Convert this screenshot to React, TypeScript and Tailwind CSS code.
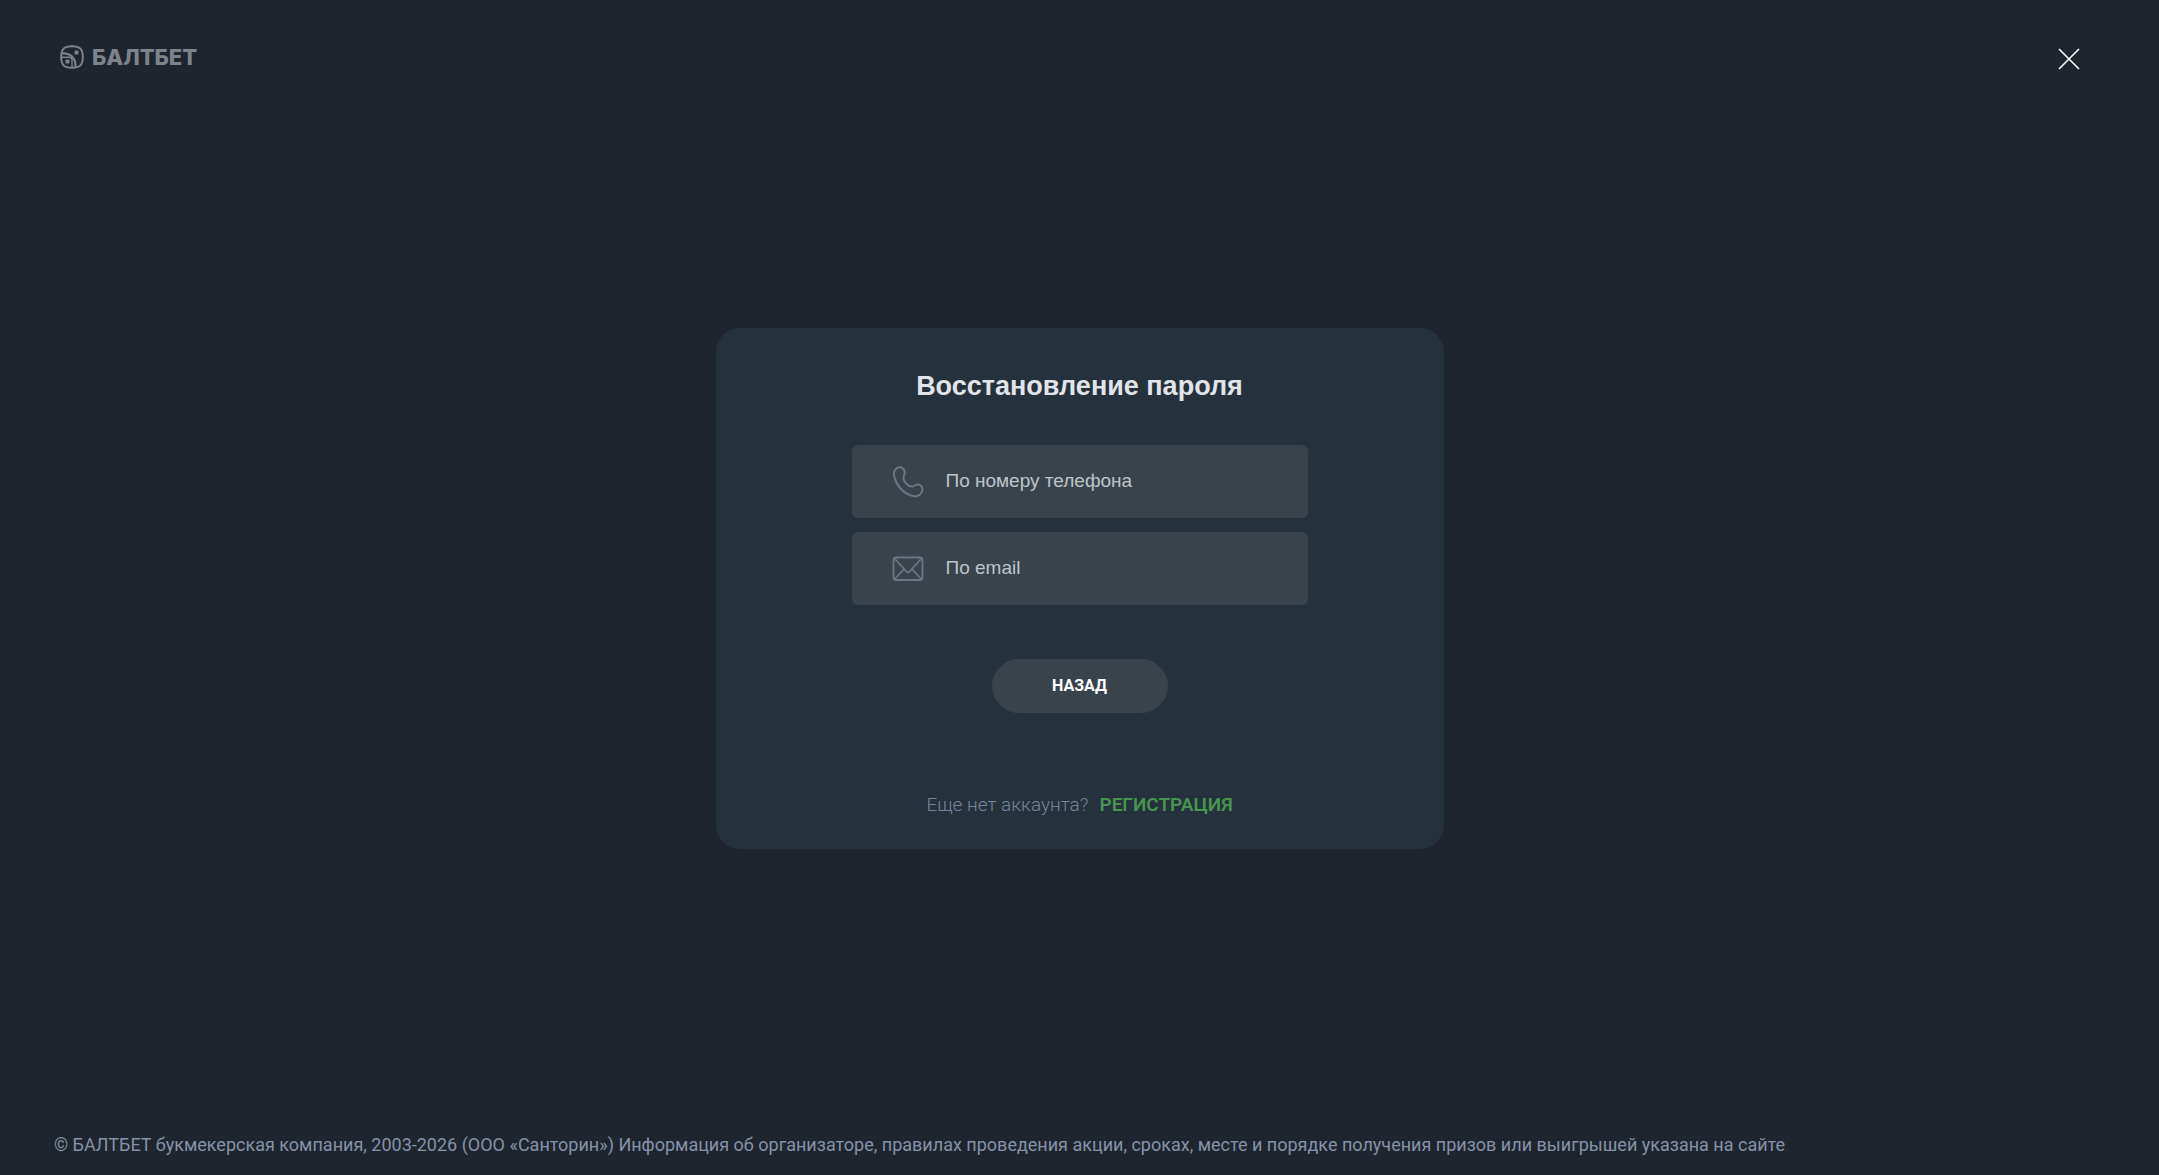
import React from "react";

const PhoneIcon = () => (
  <svg width="32" height="32" viewBox="0 0 32 32" fill="none" stroke="currentColor" strokeWidth="2" strokeLinejoin="round" aria-hidden="true">
    <path d="M2 9C1.4 5.600 3.400 1.600 7.200 1.300C10.600 1 13 4 12.800 6.800C12.600 9.200 11.300 10.200 11.500 12.300C11.800 15.800 16 20.300 19.700 20.600C21.800 20.800 22.600 19 25.200 18.600C28.400 18.200 31 21 30.400 24.300C29.700 28 26.600 30.600 22.600 30.200C13 29.400 3.600 19.500 2 9Z" />
  </svg>
);

const MailIcon = () => (
  <svg width="32" height="32" viewBox="0 0 32 32" fill="none" stroke="currentColor" strokeWidth="1.8" strokeLinejoin="round" aria-hidden="true">
    <rect x="1.500" y="4.500" width="29" height="22.500" rx="2.500" />
    <path d="M2.500 5.500L14.500 18.500Q16 20.300 17.500 18.500L29.500 5.500M2.500 26L12 16M29.500 26L20 16" />
  </svg>
);

const Logo = () => (
  <a href="/" className="flex items-center gap-2 text-[#7d838b]">
    <svg width="24" height="24" viewBox="0 0 24 24" fill="none" stroke="currentColor" strokeWidth="2" aria-hidden="true">
      <path d="M12 1.200C20 1.200 22.800 4 22.800 12S20 22.800 12 22.800S1.200 20 1.200 12S4 1.200 12 1.200Z" />
      <path d="M1.500 8.500C10.500 7.500 16 13 15.500 22.500" strokeWidth="2.200" />
      <path d="M2 12.300H9.500Q12 12.300 12 15V22.500" strokeWidth="1.400" />
      <rect x="5.500" y="14.500" width="4" height="4" rx="1" fill="currentColor" stroke="none" />
      <rect x="14.500" y="5.500" width="4" height="4" rx="1" fill="currentColor" stroke="none" />
    </svg>
    <span className="font-[Inter,sans-serif] text-[22px] leading-7 font-extrabold">БАЛТБЕТ</span>
  </a>
);

const options = [
  { id: "phone", label: "По номеру телефона", icon: <PhoneIcon /> },
  { id: "email", label: "По email", icon: <MailIcon /> },
];

const App = () => {
  return (
    <div className="flex min-h-screen flex-col bg-[#1e252e] font-[Roboto,sans-serif]">
      <header className="flex items-start justify-between pt-[31px] pr-[62px] pb-[27px] pl-[60px]">
        <div className="pt-3">
          <Logo />
        </div>
        <button type="button" aria-label="Закрыть" className="flex size-14 items-center justify-center text-white">
          <svg width="22" height="22" viewBox="0 0 22 22" fill="none" stroke="currentColor" strokeWidth="1.6" aria-hidden="true">
            <path d="M1 1L21 21M21 1L1 21" />
          </svg>
        </button>
      </header>

      <main className="flex flex-1 items-center justify-center">
        <section className="flex w-full max-w-[728px] flex-col items-center rounded-3xl bg-[#25313c] px-6 pt-10 pb-[30px]">
          <h1 className="font-['Liberation_Sans',sans-serif] text-[27px] leading-9 font-bold text-[#e1e5e9]">
            Восстановление пароля
          </h1>

          <div className="mt-[41px] flex w-full max-w-[456px] flex-col gap-[14px]">
            {options.map((option) => (
              <button
                key={option.id}
                type="button"
                className="flex h-[73px] items-center gap-[22px] rounded-md bg-[#39434c] pl-10 font-['Liberation_Sans',sans-serif] text-[19px] text-[#bec5cb]"
              >
                <span className="text-[#6b7784]">{option.icon}</span>
                {option.label}
              </button>
            ))}
          </div>

          <button type="button" className="mt-[54px] h-[54px] w-44 rounded-full bg-[#39434c] text-base font-bold text-white">
            НАЗАД
          </button>

          <p className="mt-[78px] flex items-center gap-[11px] text-[19px] leading-7 font-light text-[#77859c]">
            Еще нет аккаунта?
            <a href="/registration" className="font-semibold text-[#479550]">
              РЕГИСТРАЦИЯ
            </a>
          </p>
        </section>
      </main>

      <footer className="px-[54px] pt-[70px] pb-[18px] text-lg leading-6 text-[#8592a9]">
        © БАЛТБЕТ букмекерская компания, 2003-2026 (ООО «Санторин») Информация об организаторе, правилах проведения
        акции, сроках, месте и порядке получения призов или выигрышей указана на сайте
      </footer>
    </div>
  );
};

export default App;
